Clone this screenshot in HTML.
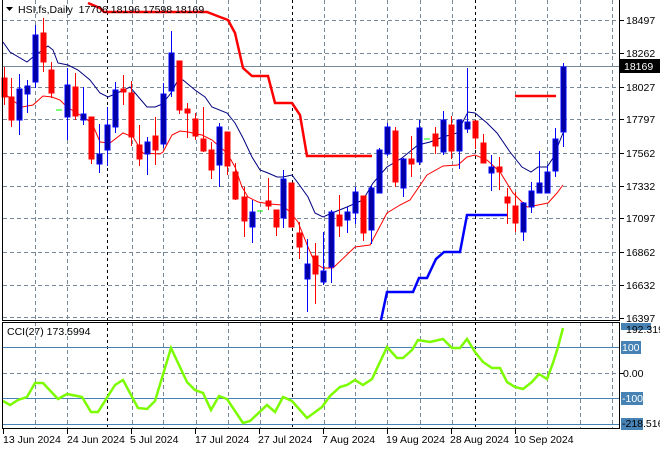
<!DOCTYPE html>
<html><head><meta charset="utf-8"><style>
html,body{margin:0;padding:0;background:#fff;width:660px;height:450px;overflow:hidden}
svg text{font-family:"Liberation Sans","DejaVu Sans",sans-serif;font-size:10.5px;fill:#000}
</style></head><body>
<svg width="660" height="450" viewBox="0 0 660 450" xmlns="http://www.w3.org/2000/svg">
<rect width="660" height="450" fill="#fff"/>
<!-- grid main -->
<g stroke="#778899" stroke-width="1" stroke-dasharray="4,3" fill="none">
<path d="M3 20.5H619M3 53.5H619M3 87.5H619M3 119.5H619M3 153.5H619M3 186.5H619M3 218.5H619M3 252.5H619M3 285.5H619M3 317.5H619"/>
<path d="M35.5 0V320M67.5 0V320M132.5 0V320M163.5 0V320M196.5 0V320M228.5 0V320M260.5 0V320M324.5 0V320M355.5 0V320M387.5 0V320M420.5 0V320M452.5 0V320M515.5 0V320M547.5 0V320M580.5 0V320M612.5 0V320"/>
<path d="M35.5 322V428M67.5 322V428M132.5 322V428M163.5 322V428M196.5 322V428M228.5 322V428M260.5 322V428M324.5 322V428M355.5 322V428M387.5 322V428M420.5 322V428M452.5 322V428M515.5 322V428M547.5 322V428M580.5 322V428M612.5 322V428M3 373.5H619"/>
</g>
<g stroke="#000" stroke-width="1" stroke-dasharray="3,3">
<path d="M107.5 0V320M292.5 0V320M475.5 0V320M107.5 322V428M292.5 322V428M475.5 322V428"/>
</g>
<path d="M3 66.5H619" stroke="#778899" stroke-width="1"/>
<!-- thick red step -->
<polyline fill="none" stroke="#ff0000" stroke-width="2.5" points="88,3 100,8 104,12 207,12 220,17 228,20 235,33 243,68 252,76 268,76 275,103 292,103 300,115 307,156 372,156"/>
<polyline fill="none" stroke="#ff0000" stroke-width="2.5" points="515,96 556,96"/>
<!-- thick blue step -->
<polyline fill="none" stroke="#0000ff" stroke-width="2.5" points="381,320 387,292 413,292 419,278 427,278 436,259 444,252 460,252 467,215 507,215"/>
<!-- navy MA -->
<polyline fill="none" stroke="#000080" stroke-width="1" points="3,42 10,52 27,62 33,57 48,46 53,50 58,63 68,65 78,70 90,80 100,93 108,97 115,94 130,87 147,107 155,107 160,105 163,103 171,93 178,80 183,80 195,90 205,97 212,107 227,113 235,123 243,138 252,157 260,170 268,173 277,177 283,177 292,175 298,183 308,197 315,213 323,217 332,213 347,207 363,200 373,183 387,167 402,158 418,145 430,142 443,137 457,133 468,112 475,113 487,123 497,133 510,152 522,167 531,172 538,167 547,167 553,158 563,133"/>
<!-- red MA -->
<polyline fill="none" stroke="#ff0000" stroke-width="1" points="3,92 12,100 22,107 33,105 43,96 52,97 60,100 67,107 80,115 92,123 100,142 110,143 123,133 133,137 143,153 160,154 163,152 172,135 180,131 188,132 202,135 212,140 227,153 235,167 242,187 248,197 258,202 270,204 282,205 290,212 298,222 308,247 315,263 323,268 333,268 355,247 370,245 387,213 400,205 410,200 427,175 443,166 458,165 467,157 475,155 487,160 500,172 513,193 527,207 538,205 548,203 557,193 563,185"/>
<!-- candles -->
<g id="c"></g>
<g stroke-width="1">
<script></script>
</g>
<g fill="#ff0000" stroke="#ff0000">
<path d="M4.5 67V105M11.5 78V127M43.5 18V72M51.5 62V98M75.5 73V120M91.5 117V164M123.5 75V105M131.5 81V146M139.5 125V166M155.5 117V165M179.5 61V114M187.5 103V138M195.5 113V140M203.5 107V152M211.5 142V179M227.5 132V175M235.5 163V200M244.5 187V237M268.5 178V210M276.5 210V236M291.5 183V227M299.5 222V259M315.5 243V304M339.5 195V237M363.5 196V241M395.5 127V187M411.5 136V177M435.5 127V154M451.5 116V159M475.5 121V149M483.5 134V163M499.5 157V190M507.5 188V224M515.5 192V232" fill="none"/>
<rect x="2" y="78" width="5" height="19"/><rect x="9" y="97" width="5" height="23"/><rect x="41" y="33" width="5" height="29"/><rect x="49" y="70" width="5" height="23"/><rect x="73" y="87" width="5" height="29"/><rect x="89" y="117" width="5" height="42"/><rect x="121" y="89" width="5" height="3"/><rect x="129" y="93" width="5" height="44"/><rect x="137" y="145" width="5" height="14"/><rect x="153" y="136" width="5" height="14"/><rect x="177" y="61" width="5" height="49"/><rect x="185" y="109" width="5" height="4"/><rect x="193" y="119" width="5" height="17"/><rect x="201" y="139" width="5" height="12"/><rect x="209" y="150" width="5" height="20"/><rect x="225" y="132" width="5" height="34"/><rect x="233" y="172" width="5" height="27"/><rect x="242" y="197" width="5" height="24"/><rect x="266" y="201" width="5" height="5"/><rect x="274" y="210" width="5" height="17"/><rect x="289" y="183" width="5" height="44"/><rect x="297" y="233" width="5" height="14"/><rect x="313" y="256" width="5" height="18"/><rect x="337" y="215" width="5" height="11"/><rect x="361" y="196" width="5" height="37"/><rect x="393" y="131" width="5" height="51"/><rect x="409" y="159" width="5" height="5"/><rect x="433" y="134" width="5" height="12"/><rect x="449" y="125" width="5" height="26"/><rect x="473" y="121" width="5" height="17"/><rect x="481" y="143" width="5" height="20"/><rect x="497" y="167" width="5" height="5"/><rect x="505" y="197" width="5" height="6"/><rect x="513" y="206" width="5" height="17"/>
</g>
<g fill="#0000a0" stroke="#0000ff">
<path d="M19.5 74V135M27.5 80V113M35.5 25V88M67.5 68V140M83.5 87V125M99.5 124V173M107.5 107V166M115.5 82V133M147.5 137V175M163.5 83V148M171.5 31V97M219.5 123V187M252.5 200V243M283.5 170V228M307.5 239V312M323.5 232V285M331.5 210V283M347.5 207V233M355.5 187V224M371.5 185V244M379.5 148V193M387.5 123V156M403.5 158V197M419.5 120V165M443.5 111V155M459.5 120V169M467.5 68V133M491.5 155V191M523.5 202V241M531.5 182V213M539.5 151V193M547.5 165V193M555.5 128V177M563.5 63V147" fill="none"/>
<rect x="17" y="89" width="5" height="31"/><rect x="25" y="86" width="5" height="8"/><rect x="33" y="35" width="5" height="47"/><rect x="65" y="85" width="5" height="32"/><rect x="81" y="114" width="5" height="6"/><rect x="97" y="154" width="5" height="10"/><rect x="105" y="125" width="5" height="25"/><rect x="113" y="90" width="5" height="37"/><rect x="145" y="142" width="5" height="12"/><rect x="161" y="94" width="5" height="50"/><rect x="169" y="53" width="5" height="38"/><rect x="217" y="127" width="5" height="38"/><rect x="250" y="212" width="5" height="15"/><rect x="281" y="179" width="5" height="39"/><rect x="305" y="264" width="5" height="15"/><rect x="321" y="271" width="5" height="11"/><rect x="329" y="212" width="5" height="55"/><rect x="345" y="212" width="5" height="8"/><rect x="353" y="192" width="5" height="21"/><rect x="369" y="188" width="5" height="42"/><rect x="377" y="150" width="5" height="43"/><rect x="385" y="127" width="5" height="27"/><rect x="401" y="159" width="5" height="29"/><rect x="417" y="128" width="5" height="34"/><rect x="441" y="120" width="5" height="32"/><rect x="457" y="120" width="5" height="31"/><rect x="465" y="122" width="5" height="7"/><rect x="489" y="167" width="5" height="6"/><rect x="521" y="203" width="5" height="29"/><rect x="529" y="191" width="5" height="16"/><rect x="537" y="183" width="5" height="10"/><rect x="545" y="172" width="5" height="21"/><rect x="553" y="139" width="5" height="32"/><rect x="561" y="67" width="5" height="65"/>
</g>
<path d="M56 110H62M257 211H263M424 139H430" stroke="#00ff00" stroke-width="1"/>
<!-- CCI levels -->
<path d="M3 347.5H619M3 398.5H619M3 424.5H619" stroke="#4682b4" stroke-width="1"/>
<polyline fill="none" stroke="#7cfc00" stroke-width="2.5" points="3,401 10,405 18,400 27,397 35,383 43,383 58,399 67,394 82,397 91,412 98,412 115,385 123,380 138,408 147,409 155,401 171,348 187,382 195,390 203,393 211,410 219,396 227,399 243,423 250,421 267,405 275,412 283,397 292,401 307,418 322,407 330,396 340,387 347,385 355,380 363,385 372,379 387,347 397,358 403,358 412,350 418,340 430,342 443,339 452,348 460,348 467,339 475,352 483,362 492,368 500,368 507,382 515,387 523,389 532,382 539,374 547,379 553,363 558,347 563,328"/>
<!-- frames -->
<g fill="none" stroke="#000" stroke-width="1">
<path d="M2.5 0V320.5H619.5V0"/>
<path d="M2.5 322.5H619.5V428.5H2.5Z"/>
<path d="M3.5 429V434M67.5 429V434M131.5 429V434M195.5 429V434M259.5 429V434M323.5 429V434M387.5 429V434M451.5 429V434M515.5 429V434"/>
<path d="M620 20.5H624M620 53.5H624M620 87.5H624M620 119.5H624M620 153.5H624M620 186.5H624M620 218.5H624M620 252.5H624M620 285.5H624M620 318.5H624M620 373.5H624"/>
</g>
<!-- title -->
<path d="M6 7H13L9.5 11Z" fill="#000"/>
<text x="18" y="13">HSI,fs,Daily&#160;&#160;17706 18196 17598 18169</text>
<text x="7" y="335">CCI(27) 173.5994</text>
<!-- price labels -->
<g>
<text x="626" y="24">18497</text><text x="626" y="57">18262</text><text x="626" y="91">18027</text><text x="626" y="123">17797</text><text x="626" y="157">17562</text><text x="626" y="190">17332</text><text x="626" y="222">17097</text><text x="626" y="256">16862</text><text x="626" y="289">16632</text><text x="626" y="322">16397</text>
</g>
<rect x="620" y="59" width="40" height="14" fill="#000"/>
<text x="624" y="70" style="fill:#fff">18169</text>
<rect x="621" y="323" width="30" height="7" fill="#4682b4"/>
<text x="626" y="333">192.3192</text>
<rect x="621" y="341" width="20" height="13" fill="#4682b4"/>
<text x="622" y="351" style="fill:#fff">100</text>
<text x="623" y="377">0.00</text>
<rect x="621" y="392" width="22" height="13" fill="#4682b4"/>
<text x="622" y="402" style="fill:#fff">-100</text>
<rect x="621" y="418" width="22" height="12" fill="#4682b4"/>
<text x="622" y="427">-218.516</text>
<!-- dates -->
<g>
<text x="3" y="443">13 Jun 2024</text><text x="67" y="443">24 Jun 2024</text><text x="130" y="443">5 Jul 2024</text><text x="195" y="443">17 Jul 2024</text><text x="258" y="443">27 Jul 2024</text><text x="322" y="443">7 Aug 2024</text><text x="386" y="443">19 Aug 2024</text><text x="450" y="443">28 Aug 2024</text><text x="514" y="443">10 Sep 2024</text>
</g>
</svg>
</body></html>
